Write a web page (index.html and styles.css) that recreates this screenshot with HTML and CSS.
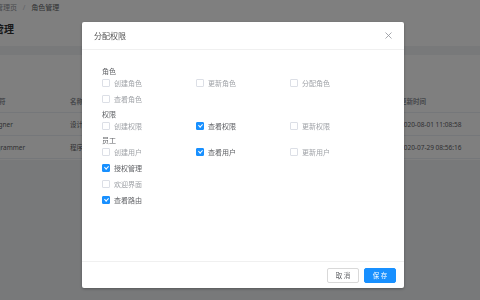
FILE: index.html
```html
<!DOCTYPE html>
<html lang="zh">

<head>
    <meta charset="UTF-8">
    <meta name="viewport" content="width=device-width, initial-scale=1.0">
    <title>角色管理</title>
    <link rel="stylesheet" href="styles.css">
</head>

<body>
    <div class="page-header">
        <div class="breadcrumb">
            <span>管理页</span>
            <span class="sep">/</span>
            <span class="current">角色管理</span>
        </div>
        <div class="page-title">角色管理</div>
    </div>

    <div class="card">
        <div class="table">
            <div class="row head">
                <div>标识符</div>
                <div>名称</div>
                <div>更新时间</div>
            </div>
            <div class="row">
                <div>designer</div>
                <div>设计师</div>
                <div>2020-08-01 11:08:58</div>
            </div>
            <div class="row">
                <div>programmer</div>
                <div>程序员</div>
                <div>2020-07-29 08:56:16</div>
            </div>
        </div>
    </div>

    <div class="mask"></div>

    <div class="dialog">
        <div class="dialog-header">
            <span class="dialog-title">分配权限</span>
            <svg class="close" width="7" height="7" viewBox="0 0 7 7">
                <path d="M0.5 0.5 L6.5 6.5 M6.5 0.5 L0.5 6.5" stroke="#909399" stroke-width="0.8" fill="none" />
            </svg>
        </div>

        <div class="dialog-body">
            <div class="group">
                <div class="group-label">角色</div>
                <div class="items">
                    <label class="item"><span class="box"></span>创建角色</label>
                    <label class="item"><span class="box"></span>更新角色</label>
                    <label class="item"><span class="box"></span>分配角色</label>
                    <label class="item"><span class="box"></span>查看角色</label>
                </div>
            </div>

            <div class="group">
                <div class="group-label">权限</div>
                <div class="items">
                    <label class="item"><span class="box"></span>创建权限</label>
                    <label class="item checked"><span class="box"></span>查看权限</label>
                    <label class="item"><span class="box"></span>更新权限</label>
                </div>
            </div>

            <div class="group">
                <div class="group-label">员工</div>
                <div class="items">
                    <label class="item"><span class="box"></span>创建用户</label>
                    <label class="item checked"><span class="box"></span>查看用户</label>
                    <label class="item"><span class="box"></span>更新用户</label>
                    <label class="item wide checked"><span class="box"></span>授权管理</label>
                    <label class="item wide"><span class="box"></span>欢迎界面</label>
                    <label class="item wide checked"><span class="box"></span>查看路由</label>
                </div>
            </div>
        </div>

        <div class="dialog-footer">
            <button class="btn cancel-btn">取 消</button>
            <button class="btn save-btn">保 存</button>
        </div>
    </div>
</body>

</html>
```

FILE: styles.css
```css
body {
    margin: 0;
    font-family: "Noto Sans", "Noto Sans CJK SC", sans-serif;
    background-color: #f0f2f5;
    overflow: hidden;
}

/* page behind the dialog */

.page-header {
    background-color: #ffffff;
    height: 46px;
    box-sizing: border-box;
    padding-top: 3px;
}

.breadcrumb {
    margin-left: -4px;
    font-size: 7px;
    line-height: 9px;
    color: #909399;
}

.breadcrumb .sep {
    margin: 0 4px;
    color: #c0c4cc;
}

.breadcrumb .current {
    color: #606266;
}

.page-title {
    margin-left: -26px;
    margin-top: 11px;
    font-size: 10px;
    line-height: 12px;
    font-weight: bold;
    color: #303133;
}

.card {
    background-color: #ffffff;
    margin-top: 9px;
    height: 105px;
    padding-top: 35px;
    box-sizing: border-box;
}

.table {
    margin-left: -14px;
}

.row {
    display: grid;
    grid-template-columns: 84px 330px 1fr;
    height: 23px;
    align-items: center;
    font-size: 6.5px;
    color: #606266;
    border-bottom: 1px solid #ebeef5;
    box-sizing: border-box;
}

.row.head {
    color: #909399;
    font-weight: bold;
}

/* dialog */

.mask {
    position: fixed;
    inset: 0;
    background-color: rgba(0, 0, 0, 0.5);
}

.dialog {
    position: fixed;
    left: 82px;
    top: 22px;
    width: 322px;
    height: 266px;
    background-color: #ffffff;
    border-radius: 2px;
    box-shadow: 0 1px 3px rgba(0, 0, 0, 0.3);
    display: flex;
    flex-direction: column;
}

.dialog-header {
    height: 27px;
    padding: 0 12px;
    display: flex;
    align-items: center;
    justify-content: space-between;
    border-bottom: 1px solid #f0f0f0;
}

.dialog-title {
    font-size: 8px;
    color: #555;
}

.dialog-body {
    flex: 1;
    padding: 17px 20px 0;
}

.group {
    margin-bottom: 4.5px;
}

.group-label {
    font-size: 7px;
    line-height: 10px;
    color: #606266;
}

.items {
    display: flex;
    flex-wrap: wrap;
    row-gap: 4px;
}

.item {
    width: 94px;
    height: 12px;
    display: flex;
    align-items: center;
    font-size: 7px;
    color: #a0a3a8;
}

.item.wide {
    width: 100%;
}

.item .box {
    width: 6px;
    height: 6px;
    border: 1px solid #dcdfe6;
    border-radius: 1px;
    margin-right: 4px;
    position: relative;
}

.item.checked {
    color: #606266;
}

.item.checked .box {
    background-color: #1890ff;
    border-color: #1890ff;
}

.item.checked .box::after {
    content: "";
    position: absolute;
    left: 1.6px;
    top: 0.3px;
    width: 1.6px;
    height: 3.2px;
    border: solid #ffffff;
    border-width: 0 1px 1px 0;
    transform: rotate(45deg);
}

.dialog-footer {
    height: 26px;
    border-top: 1px solid #f0f0f0;
    display: flex;
    align-items: center;
    justify-content: flex-end;
    padding: 0 8px;
    gap: 5px;
}

.btn {
    width: 32px;
    height: 15px;
    padding: 0;
    font-family: "Noto Sans CJK SC", sans-serif;
    font-size: 6.5px;
    border-radius: 2px;
    cursor: pointer;
}

.cancel-btn {
    background-color: #ffffff;
    border: 1px solid #d9d9d9;
    color: #606266;
}

.save-btn {
    background-color: #1890ff;
    border: 1px solid #1890ff;
    color: #ffffff;
}
```
